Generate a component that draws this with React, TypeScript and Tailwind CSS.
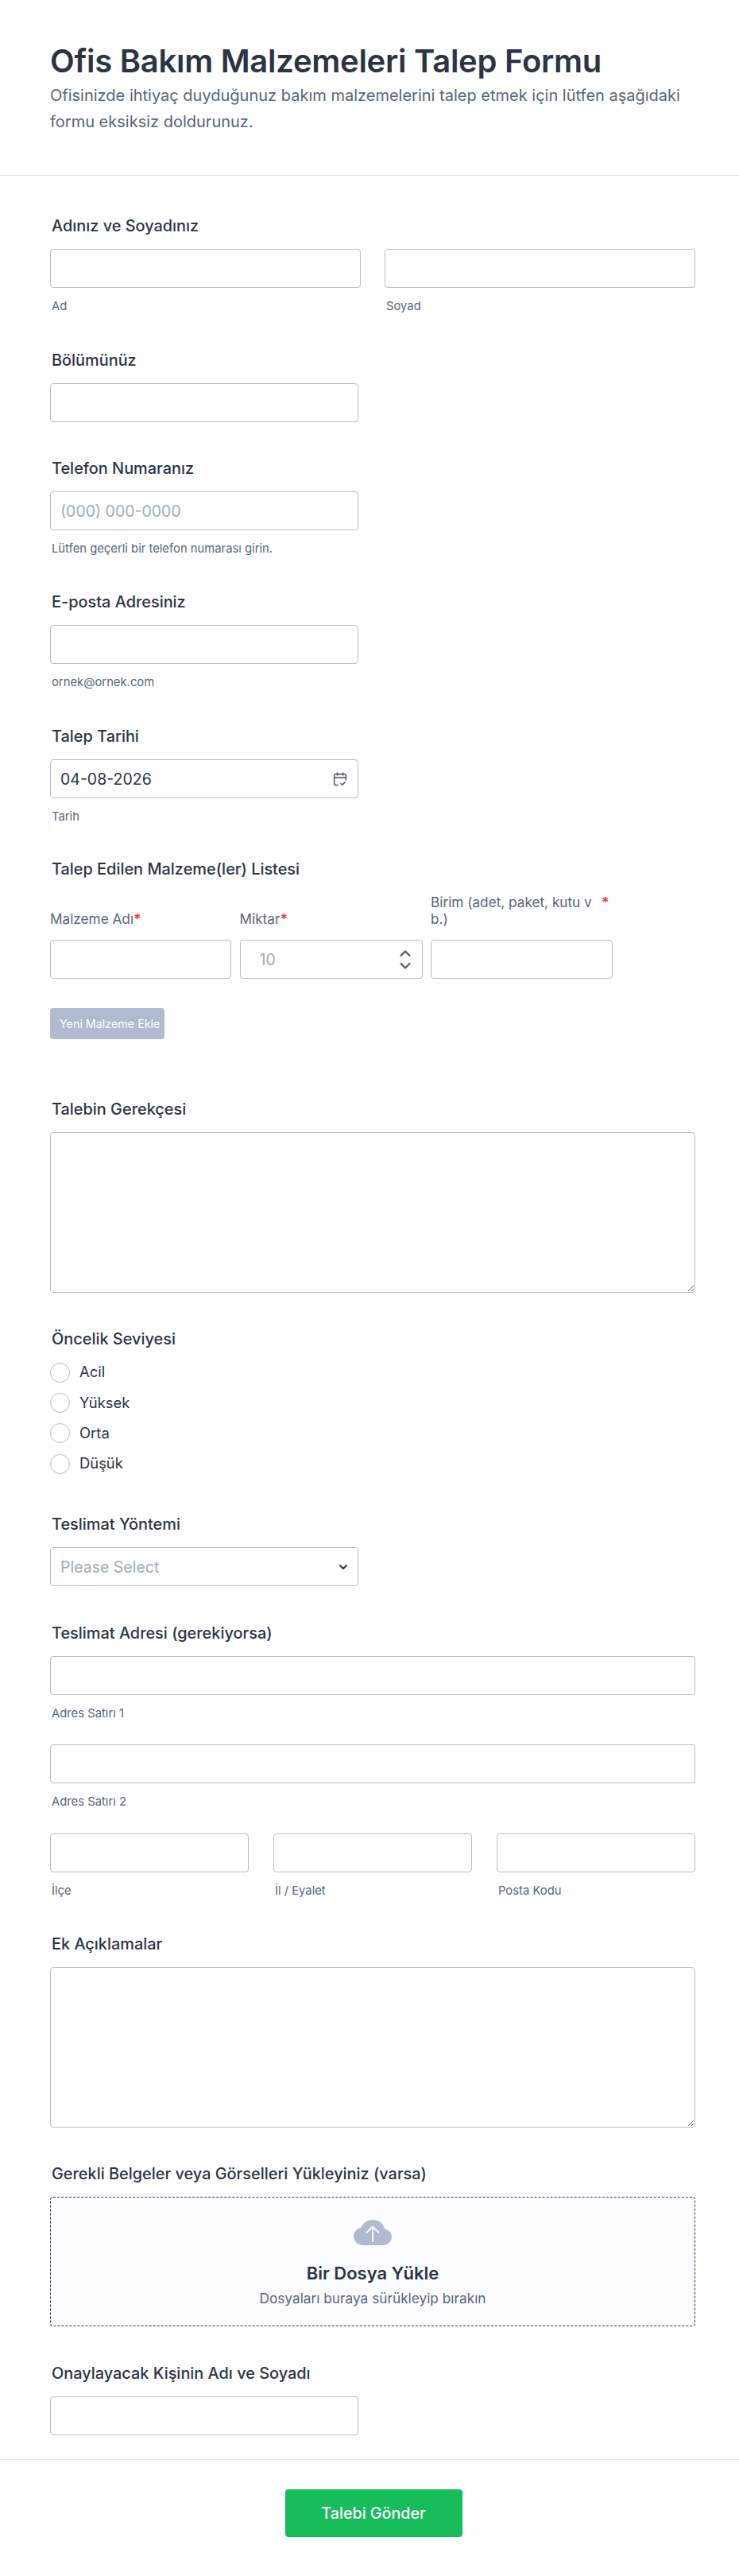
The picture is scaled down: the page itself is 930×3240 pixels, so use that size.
import React from 'react'

const inputClass =
    'block w-full h-[49px] rounded-[4px] border border-[#b8bdc9] bg-white px-3 text-[19.5px] text-[#2c3345] placeholder:text-[#a0a9bd] outline-none'

const Label = ({ children }: { children: React.ReactNode }) => (
    <label className="block h-6 pl-0.5 mb-[17px] text-[19.9px] leading-6 font-medium text-[#2c3345] whitespace-nowrap">
        {children}
    </label>
)

const Hint = ({ children }: { children: React.ReactNode }) => (
    <div className="mt-[15px] pl-0.5 h-4 text-[14.8px] leading-4 text-[#57647e]">{children}</div>
)

const Star = () => <span className="text-[#f23a3c] font-bold">*</span>

const Field = ({ label, hint, placeholder, className }: { label: string; hint?: string; placeholder?: string; className: string }) => (
    <div className={className}>
        <Label>{label}</Label>
        <div className="w-[388px]">
            <input className={inputClass} placeholder={placeholder} />
        </div>
        {hint && <Hint>{hint}</Hint>}
    </div>
)

const CalendarIcon = () => (
    <svg viewBox="0 0 18 18" className="w-[18px] h-[18px]" fill="none" stroke="#4b5565" strokeWidth="1.5" strokeLinecap="round" strokeLinejoin="round">
        <path d="M6 16.500H3.500a1.800 1.800 0 0 1-1.800-1.800V4.600a1.800 1.800 0 0 1 1.800-1.800h11a1.800 1.800 0 0 1 1.800 1.800V10" />
        <path d="M1.700 7h14.600M5.500 1v3M12.500 1v3" />
        <path d="M10 14.500l1.800 1.800 3.400-3.600" />
    </svg>
)

const Priority = ({ text }: { text: string }) => (
    <div className="flex items-center h-[38.33px]">
        <span className="w-[25px] h-[25px] rounded-full border border-[#b8bdc9] bg-white" />
        <span className="ml-3 text-[18.4px] text-[#2c3345]">{text}</span>
    </div>
)

export default function App() {
    return (
        <div className="min-h-[3240px] bg-white font-['Inter',sans-serif]">
            <header className="h-[221px] border-b border-[#dcdfe6] px-[63px] pt-[50px]">
                <h1 className="text-[40px] leading-[54px] font-semibold tracking-[-0.27px] text-[#2c3345]">Ofis Bakım Malzemeleri Talep Formu</h1>
                <p className="w-[812px] text-[20px] leading-[33px] text-[#57647e]">
                    Ofisinizde ihtiyaç duyduğunuz bakım malzemelerini talep etmek için lütfen aşağıdaki formu eksiksiz doldurunuz.
                </p>
            </header>

            <main className="px-[63px] pt-[51px] flex flex-col">
                <div>
                    <Label>Adınız ve Soyadınız</Label>
                    <div className="grid grid-cols-2 gap-[30px] w-[812px]">
                        <div>
                            <input className={inputClass} />
                            <Hint>Ad</Hint>
                        </div>
                        <div>
                            <input className={inputClass} />
                            <Hint>Soyad</Hint>
                        </div>
                    </div>
                </div>

                <Field className="mt-[48px]" label="Bölümünüz" />
                <Field className="mt-[46px]" label="Telefon Numaranız" placeholder="(000) 000-0000" hint="Lütfen geçerli bir telefon numarası girin." />
                <Field className="mt-[47px]" label="E-posta Adresiniz" hint="ornek@ornek.com" />

                <div className="mt-[48px]">
                    <Label>Talep Tarihi</Label>
                    <div className="relative w-[388px]">
                        <input className={inputClass} defaultValue="04-08-2026" />
                        <span className="absolute right-[14px] top-[16px]">
                            <CalendarIcon />
                        </span>
                    </div>
                    <Hint>Tarih</Hint>
                </div>

                <div className="mt-[46px]">
                    <label className="block h-6 pl-0.5 text-[19.9px] leading-6 font-medium text-[#2c3345]">Talep Edilen Malzeme(ler) Listesi</label>
                    <div className="mt-[19px] grid grid-cols-[228px_230px_229px] gap-x-[10.5px] w-[709px] text-[17.2px] leading-[21px] text-[#57647e]">
                        <div className="flex items-end h-[42px]">
                            <span>Malzeme Adı<Star /></span>
                        </div>
                        <div className="flex items-end h-[42px]">
                            <span>Miktar<Star /></span>
                        </div>
                        <div className="flex items-start h-[42px]">
                            <span className="w-[215px]">Birim (adet, paket, kutu v b.)</span>
                            <Star />
                        </div>
                    </div>
                    <div className="mt-4 grid grid-cols-[228px_230px_229px] gap-x-[10.5px] w-[709px]">
                        <input className={inputClass} />
                        <div className="relative">
                            <input className={`${inputClass} pl-6`} placeholder="10" />
                            <svg viewBox="0 0 14 24" className="absolute right-[15px] top-[13px] w-[14px] h-6" fill="none" stroke="#4b5a75" strokeWidth="2.200" strokeLinecap="round" strokeLinejoin="round">
                                <path d="M1.500 7l5.500-5.500L12.500 7" />
                                <path d="M1.500 17l5.500 5.500 5.500-5.500" />
                            </svg>
                        </div>
                        <input className={inputClass} />
                    </div>
                    <button type="button" className="block mt-[37px] w-[144px] h-[39px] pl-3 text-left whitespace-nowrap rounded-[4px] bg-[#b1bace] text-[14.3px] text-white">
                        Yeni Malzeme Ekle
                    </button>
                </div>

                <div className="mt-[76px]">
                    <Label>Talebin Gerekçesi</Label>
                    <textarea className="block w-[812px] h-[202px] resize-y rounded-[4px] border border-[#b8bdc9] bg-white outline-none" />
                </div>

                <div className="mt-[46px]">
                    <Label>Öncelik Seviyesi</Label>
                    <div className="-mt-[6px]">
                        <Priority text="Acil" />
                        <Priority text="Yüksek" />
                        <Priority text="Orta" />
                        <Priority text="Düşük" />
                    </div>
                </div>

                <div className="mt-[45px]">
                    <Label>Teslimat Yöntemi</Label>
                    <div className="relative w-[388px]">
                        <input className={inputClass} placeholder="Please Select" />
                        <svg viewBox="0 0 12 8" className="absolute right-[13px] top-[21px] w-3 h-2" fill="none" stroke="#2c3345" strokeWidth="2" strokeLinecap="round" strokeLinejoin="round">
                            <path d="M2 2l4 4 4-4" />
                        </svg>
                    </div>
                </div>

                <div className="mt-[47px]">
                    <Label>Teslimat Adresi (gerekiyorsa)</Label>
                    <div className="w-[812px]">
                        <input className={inputClass} />
                        <Hint>Adres Satırı 1</Hint>
                        <input className={`${inputClass} mt-[31px]`} />
                        <Hint>Adres Satırı 2</Hint>
                        <div className="mt-[32px] grid grid-cols-3 gap-[31px]">
                            <div>
                                <input className={inputClass} />
                                <Hint>İlçe</Hint>
                            </div>
                            <div>
                                <input className={inputClass} />
                                <Hint>İl / Eyalet</Hint>
                            </div>
                            <div>
                                <input className={inputClass} />
                                <Hint>Posta Kodu</Hint>
                            </div>
                        </div>
                    </div>
                </div>

                <div className="mt-[47px]">
                    <Label>Ek Açıklamalar</Label>
                    <textarea className="block w-[812px] h-[202px] resize-y rounded-[4px] border border-[#b8bdc9] bg-white outline-none" />
                </div>

                <div className="mt-[46px]">
                    <Label>Gerekli Belgeler veya Görselleri Yükleyiniz (varsa)</Label>
                    <div className="w-[812px] h-[163px] rounded-[4px] border border-dashed border-[#2c3345] bg-[#fbfcff] bg-[radial-gradient(#eef0f6_0.6px,transparent_0.6px)] bg-[size:6px_6px] flex flex-col items-center pt-[28px]">
                        <svg viewBox="0 0 48 32" className="w-12 h-8 shrink-0">
                            <path fill="#b1bace" d="M12 32C5.400 32 0 27 0 20.800c0-5.400 4-9.800 9.300-10.800C11.500 4.100 17.200 0 24 0c7.600 0 13.800 5 15 11.400 5 .9 9 4.700 9 9.800C48 27.200 42.600 32 36 32z" />
                            <path fill="none" stroke="#fff" strokeWidth="1.800" strokeLinecap="round" strokeLinejoin="round" d="M24 27V9M16.500 16L24 8.500 31.500 16" />
                        </svg>
                        <div className="mt-[21px] text-[22px] leading-7 font-semibold text-[#2c3345]">Bir Dosya Yükle</div>
                        <div className="mt-[6px] text-[17.25px] leading-6 text-[#57647e]">Dosyaları buraya sürükleyip bırakın</div>
                    </div>
                </div>

                <Field className="mt-[47px]" label="Onaylayacak Kişinin Adı ve Soyadı" />
            </main>

            <footer className="mt-[30px] border-t border-[#e3e5ea] flex justify-center pt-[37px]">
                <button type="button" className="ml-[10px] w-[223px] h-[60px] rounded-[4px] bg-[#18bd5b] text-[19.7px] font-medium text-white">
                    Talebi Gönder
                </button>
            </footer>
        </div>
    )
}
